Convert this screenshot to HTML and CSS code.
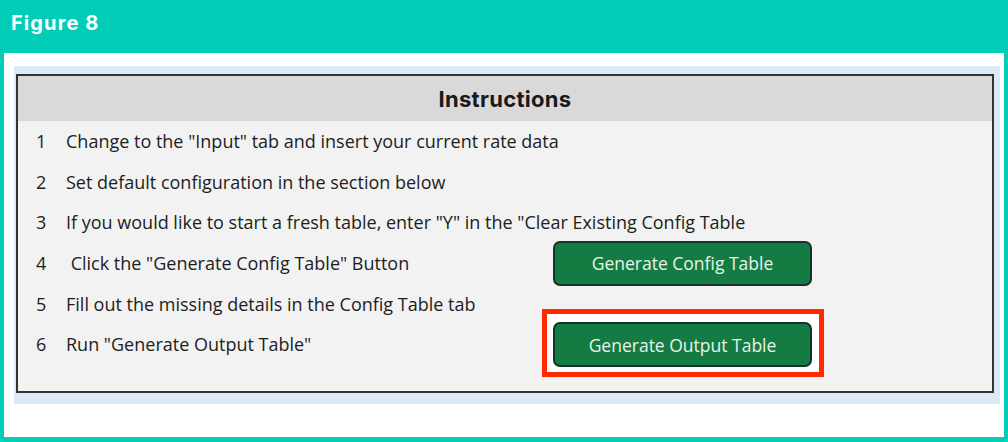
FILE: index.html
```html
<!DOCTYPE html>
<html lang="en">

<head>
    <meta charset="UTF-8">
    <title>Figure 8</title>
    <link rel="stylesheet" href="styles.css">
</head>

<body>
    <header class="figur">Figure 8</header>

    <section class="ramme">
        <div class="ark">
            <article class="tabel">
                <h2>Instructions</h2>

                <div class="trin">
                    <span class="nr">1</span>
                    <span class="tekst">Change to the "Input" tab and insert your current rate data</span>
                    <span></span>

                    <span class="nr">2</span>
                    <span class="tekst">Set default configuration in the section below</span>
                    <span></span>

                    <span class="nr">3</span>
                    <span class="tekst">If you would like to start a fresh table, enter "Y" in the "Clear Existing Config Table</span>
                    <span></span>

                    <span class="nr">4</span>
                    <span class="tekst"> Click the "Generate Config Table" Button</span>
                    <div class="knapfelt">
                        <button class="knap">Generate Config Table</button>
                    </div>

                    <span class="nr">5</span>
                    <span class="tekst">Fill out the missing details in the Config Table tab</span>
                    <span></span>

                    <span class="nr">6</span>
                    <span class="tekst">Run "Generate Output Table"</span>
                    <div class="knapfelt">
                        <div class="markering">
                            <button class="knap">Generate Output Table</button>
                        </div>
                    </div>
                </div>
            </article>
        </div>
    </section>
</body>

</html>
```

FILE: styles.css
```css
body {
    margin: 0;
    background-color: #00ccb8;
    font-family: "Open Sans", "Noto Sans", sans-serif;
    height: 442px;
    overflow: hidden;
}

.figur {
    height: 53px;
    box-sizing: border-box;
    padding: 11px 0 0 11px;
    color: white;
    font-family: Inter, "Noto Sans", sans-serif;
    font-weight: 700;
    font-size: 20px;
    letter-spacing: 1.1px;
}

.ramme {
    margin: 0 4px;
    height: 384px;
    box-sizing: border-box;
    background-color: white;
    padding: 13px 4px 33px 10px;
}

.ark {
    height: 100%;
    box-sizing: border-box;
    background-color: #dce9f6;
    padding: 8px 6px 11px 2px;
}

.tabel {
    height: 100%;
    box-sizing: border-box;
    border: 2px solid #333;
    background-color: #f2f2f2;
}

.tabel h2 {
    margin: 0;
    height: 45px;
    background-color: #d9d9d9;
    text-align: center;
    font-family: Inter, "Noto Sans", sans-serif;
    font-size: 22px;
    font-weight: 700;
    letter-spacing: 0.3px;
    line-height: 46px;
    color: #1a1a1a;
}

.trin {
    display: grid;
    grid-template-columns: 30px 487px 1fr;
    grid-auto-rows: 40.6px;
    align-items: center;
    padding: 0 0 0 18px;
    color: #211d1d;
    font-size: 18px;
}

.tekst {
    white-space: pre;
}

.knapfelt {
    display: flex;
    align-items: center;
    height: 40.6px;
}

.markering {
    margin: -2px 0 0 -11px;
    padding: 8px 7px 5px 6px;
    border: 5px solid #ff2a00;
    background-color: white;
}

.knap {
    width: 259px;
    height: 45px;
    border: 2px solid #12332a;
    border-radius: 7px;
    background-color: #147c43;
    color: #e8f3ea;
    font-family: "Open Sans", "Noto Sans", sans-serif;
    font-size: 17.5px;
}
```
